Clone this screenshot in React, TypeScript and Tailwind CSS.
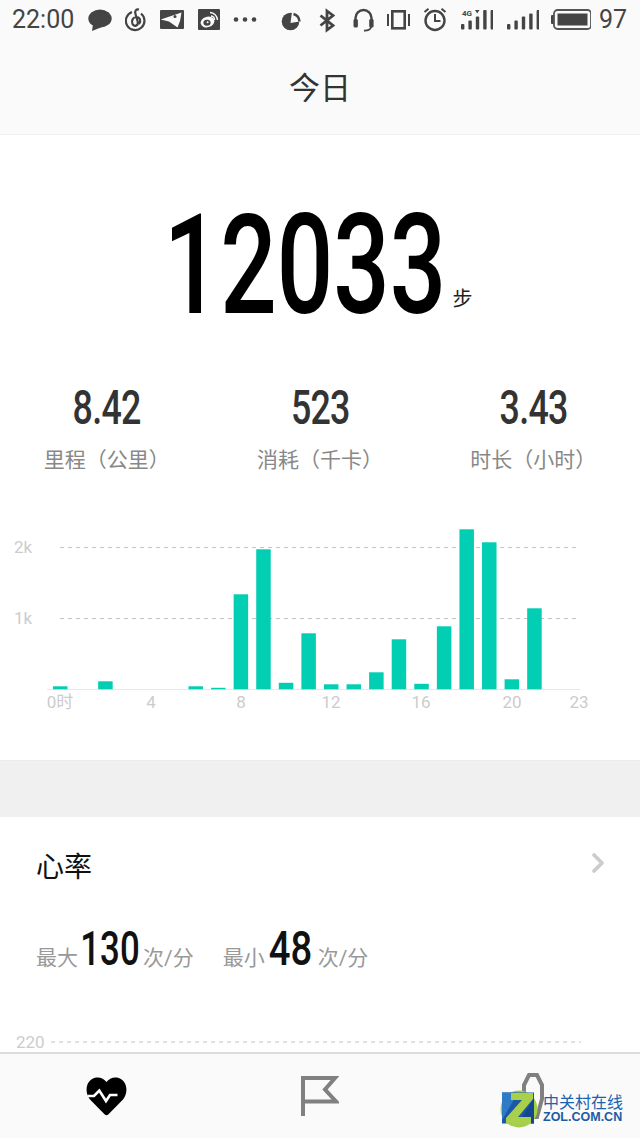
import React from 'react';
import { ChevronRight } from 'lucide-react';

const bars = [3, 0, 8, 0, 0, 0, 3, 1.5, 95, 140, 6.5, 56, 5, 5, 17, 50, 5.5, 63, 160, 147, 10, 81];
const hourLabels = [
  { x: 60, text: '0时' },
  { x: 151, text: '4' },
  { x: 241, text: '8' },
  { x: 331, text: '12' },
  { x: 421, text: '16' },
  { x: 512, text: '20' },
  { x: 579, text: '23' },
];

const Icon: React.FC<{ w: number; ml: number; children: React.ReactNode }> = ({ w, ml, children }) => (
  <svg width={w} height={40} viewBox={`0 0 ${w} 40`} style={{ marginLeft: ml }} className="shrink-0">
    {children}
  </svg>
);

const SignalBars: React.FC<{ tops: number[] }> = ({ tops }) => (
  <>
    {tops.map((top, i) => (
      <rect key={i} x={1 + i * 7.4} y={top} width={3.4} height={29.5 - top} rx={1} fill="#444" />
    ))}
  </>
);

const StatusBar = () => (
  <div className="flex h-10 items-center pl-3 text-[#444]">
    <span className="w-[63px] text-[25px] font-['Roboto',sans-serif]">22:00</span>
    <Icon w={24} ml={13}>
      <ellipse cx={12} cy={18.5} rx={11.7} ry={9} fill="#444" />
      <path d="M5 24 L4 31 L14 27 Z" fill="#444" />
    </Icon>
    <Icon w={21} ml={13}>
      <path d="M7 12 A9.3 9.3 0 1 0 16 13.5" fill="none" stroke="#444" strokeWidth={2.2} />
      <path d="M14 9.5 C11 9 9.5 11 10.5 14 L12.8 22 C13.5 26 9 27 7.5 24 C6 20.5 8 17.5 11 17 C15 16.8 16.5 21 14 24" fill="none" stroke="#444" strokeWidth={2.2} />
    </Icon>
    <Icon w={24} ml={14}>
      <rect x={0} y={10} width={24} height={19} rx={1} fill="#444" />
      <path d="M0.7 19.5 L21.5 12.5 L20 21 L17.5 27.5 L9 21.5 Z" fill="#fafafa" />
      <circle cx={15} cy={16.5} r={1.5} fill="#444" />
    </Icon>
    <Icon w={22} ml={14}>
      <rect x={0} y={9} width={22} height={21} rx={1} fill="#444" />
      <ellipse cx={9.5} cy={22} rx={7} ry={5.3} transform="rotate(-15 9.5 22)" fill="#fafafa" />
      <ellipse cx={9} cy={22.8} rx={3.6} ry={3} fill="#444" />
      <circle cx={9.6} cy={22.2} r={1} fill="#fafafa" />
      <path d="M12 12.5 A8 8 0 0 1 19.5 20 M13 16 A4 4 0 0 1 16.5 20" fill="none" stroke="#fafafa" strokeWidth={1.4} />
    </Icon>
    <Icon w={24} ml={13}>
      <circle cx={3} cy={19.5} r={2.3} fill="#444" />
      <circle cx={12} cy={19.5} r={2.3} fill="#444" />
      <circle cx={21} cy={19.5} r={2.3} fill="#444" />
    </Icon>
    <Icon w={20} ml={24}>
      <circle cx={9.5} cy={21.5} r={8.8} fill="#444" />
      <path d="M9.5 23 L11 12 L21 12 L21 21 Z" fill="#fafafa" />
      <path d="M12.5 14 A8.5 8.5 0 0 1 18.5 21.5" fill="none" stroke="#444" strokeWidth={2.4} />
    </Icon>
    <Icon w={16} ml={18}>
      <path d="M1.5 15.5 L14 25.5 L8 30 V11 L14 15.5 L1.5 25.5" fill="none" stroke="#444" strokeWidth={2.8} />
    </Icon>
    <Icon w={21} ml={18}>
      <path d="M2.5 20 V18 A8 8 0 0 1 18.5 18 V20" fill="none" stroke="#444" strokeWidth={2.4} />
      <rect x={0.5} y={19} width={4.4} height={8.5} rx={1.5} fill="#444" />
      <rect x={16.2} y={19} width={4.4} height={8.5} rx={1.5} fill="#444" />
      <path d="M18 27 C18 30 14 30.7 11 30.5" fill="none" stroke="#444" strokeWidth={1.8} />
    </Icon>
    <Icon w={23} ml={13}>
      <rect x={0} y={14} width={2} height={12} fill="#444" />
      <rect x={21} y={14} width={2} height={12} fill="#444" />
      <rect x={5.3} y={11.3} width={12.4} height={17} fill="none" stroke="#444" strokeWidth={2.6} />
    </Icon>
    <Icon w={24} ml={13}>
      <circle cx={12} cy={20.5} r={9.5} fill="none" stroke="#444" strokeWidth={2.4} />
      <path d="M12 14 V21 H17.5" fill="none" stroke="#444" strokeWidth={2} />
      <path d="M1.5 12 L5.5 8.7 M22.5 12 L18.5 8.7" fill="none" stroke="#444" strokeWidth={2} />
    </Icon>
    <Icon w={33} ml={13}>
      <SignalBars tops={[24, 20.5, 16.5, 10, 10]} />
      <text x={2} y={16} fontSize={8} fontWeight={700} fontFamily="Roboto, sans-serif" fill="#444">4G</text>
      <path d="M15 10 H19.5 L17.2 13.5 Z" fill="#444" />
    </Icon>
    <Icon w={33} ml={13}>
      <SignalBars tops={[24, 20.5, 16.5, 13.5, 10]} />
    </Icon>
    <Icon w={40} ml={12}>
      <rect x={0} y={15} width={3} height={9} rx={1} fill="#444" />
      <rect x={3} y={10} width={37} height={19} rx={3.5} fill="none" stroke="#555" strokeWidth={1.8} />
      <rect x={6.5} y={13.5} width={30} height={12} fill="#444" />
    </Icon>
    <span className="ml-2 text-[25px] font-['Roboto',sans-serif]">97</span>
  </div>
);

const StatCell: React.FC<{ value: string; label: string }> = ({ value, label }) => (
  <div className="flex flex-col items-center pt-[7px]">
    <span className="h-[50px] scale-x-[0.73] text-[49px] leading-[50px] font-medium tracking-[-1px] text-[#333]">
      {value}
    </span>
    <span className="mt-[12px] text-[21px] leading-[30px] text-[#888]">{label}</span>
  </div>
);

// condensed digits: the layout box keeps the narrowed width
const HeartNumber: React.FC<{ value: string; className: string }> = ({ value, className }) => (
  <span className={`${className} ml-[3px] flex justify-center`}>
    <span className="shrink-0 text-[49px] leading-[50px] font-medium text-[#111]">{value}</span>
  </span>
);

const StepsChart = () => (
  <svg width={640} height={210} viewBox="0 510 640 210" className="block">
    {[547.5, 618.5].map(y => (
      <line key={y} x1={60} x2={577} y1={y} y2={y} stroke="#c4c4c4" strokeWidth={1} strokeDasharray="4 4" />
    ))}
    <line x1={47} x2={580} y1={689.5} y2={689.5} stroke="#e8e8e8" strokeWidth={1} />
    {bars.map((h, i) =>
      h > 0 ? <rect key={i} x={53 + i * 22.58} y={689.3 - h} width={14.5} height={h} fill="#02ceb3" /> : null
    )}
    <g fontFamily="Roboto, 'Noto Sans CJK SC', sans-serif" fontSize={17} fill="#cccccc">
      <text x={14} y={553}>2k</text>
      <text x={14} y={624}>1k</text>
      {hourLabels.map(l => (
        <text key={l.text} x={l.x} y={708} textAnchor="middle">{l.text}</text>
      ))}
    </g>
  </svg>
);

const Watermark = () => (
  <div className="absolute left-[500px] top-[1090px] flex items-center">
    <svg width={38} height={38} viewBox="0 0 38 38" className="shrink-0">
      <circle cx={19} cy={19} r={18.5} fill="#a4cf48" />
      <rect x={2} y={2.5} width={32} height={31} fill="#1d58a8" />
      <path d="M2 2.5 L18 2.5 L2 30 Z" fill="#2f7cc6" />
      <path d="M34 33.5 L18 33.5 L34 8 Z" fill="#15478f" />
      <path d="M11 3 H33 L33 9 L18 27 H31 V34 H6 V28 L22 10 H11 Z" fill="#a9d04a" />
    </svg>
    <div className="ml-[5px] flex flex-col">
      <span className="text-[16px] leading-[17px] text-[#1c62ae]">中关村在线</span>
      <span className="text-[12.5px] leading-[13px] font-bold text-[#1c5aa4] font-['Liberation_Sans',sans-serif]">ZOL.COM.CN</span>
    </div>
  </div>
);

export default function App() {
  return (
    <div className="relative flex h-[1138px] w-[640px] flex-col overflow-hidden bg-white font-['Roboto','Noto_Sans_CJK_SC',sans-serif]">
      <header className="h-[135px] shrink-0 border-b border-[#f1f1f1] bg-[#fafafa]">
        <StatusBar />
        <h1 className="mt-[27px] text-center text-[31px] leading-[44px] font-normal text-[#333]">今日</h1>
      </header>

      <div className="min-h-0 flex-1 overflow-hidden">
        <section className="h-[625px]">
          <div className="flex h-[241px] items-end justify-center pr-[5px] pb-[51px]">
            <span className="flex w-[285px] justify-center">
              <span className="shrink-0 scale-x-[0.71] text-[140px] leading-[120px] font-medium text-black">12033</span>
            </span>
            <span className="ml-[5px] mb-[14px] text-[20px] leading-[24px] text-[#222]">步</span>
          </div>
          <div className="grid grid-cols-3">
            <StatCell value="8.42" label="里程（公里）" />
            <StatCell value="523" label="消耗（千卡）" />
            <StatCell value="3.43" label="时长（小时）" />
          </div>
          <div className="mt-[35px]">
            <StepsChart />
          </div>
        </section>

        <div className="h-[57px] border-t border-[#ececec] bg-[#f0f0f0]" />

        <section className="px-[36px] pt-[31px]">
          <div className="flex items-center justify-between">
            <h2 className="text-[28px] leading-[40px] font-normal text-[#111]">心率</h2>
            <ChevronRight size={32} strokeWidth={2.8} className="mr-[-10px] mt-[-10px] text-[#cccccc]" />
          </div>
          <div className="mt-[36px] flex items-baseline text-[21px] text-[#999]">
            <span>最大</span>
            <HeartNumber value="130" className="w-[58px] scale-x-[0.71]" />
            <span className="ml-[4px]">次/分</span>
            <span className="ml-[29px]">最小</span>
            <HeartNumber value="48" className="w-[45px] scale-x-[0.78]" />
            <span className="ml-[5px]">次/分</span>
          </div>
          <div className="mt-[57px] ml-[-20px] flex items-center">
            <span className="text-[17px] leading-[20px] text-[#cccccc]">220</span>
            <svg width={530} height={2} className="ml-[6px]">
              <line x1={0} x2={530} y1={1} y2={1} stroke="#c4c4c4" strokeWidth={1} strokeDasharray="4 4" />
            </svg>
          </div>
        </section>
      </div>

      <nav className="grid h-[86px] shrink-0 grid-cols-3 items-center border-t-2 border-[#dddddd] bg-[#fafafa]">
        <div className="flex justify-center">
          <svg width={41} height={39} viewBox="0 0 41 39">
            <path d="M22.5 37.3 Q20.5 39 18.5 37.3 L4 22.5 C-2 15 0 3 9 .8 C14 -.3 18 2 20.5 5 C23 2 27 -.3 32 .8 C41 3 43 15 37 22.5 Z" fill="#000" />
            <path d="M1.5 19 H8 L13.3 13.5 L20 24 L24 18 H31.5" fill="none" stroke="#fff" strokeWidth={2.6} />
          </svg>
        </div>
        <div className="flex justify-center">
          <svg width={38} height={40} viewBox="0 0 38 40">
            <path d="M2 40 V2 H34 L24 13.5 L35 25.5 H2" fill="none" stroke="#808080" strokeWidth={4} />
          </svg>
        </div>
        <div className="flex justify-center">
          <svg width={22} height={46} viewBox="0 0 22 46">
            <path d="M7 2 H15 L20 12 V26 L15 44 H7 L2 26 V12 Z" fill="none" stroke="#808080" strokeWidth={4} />
          </svg>
        </div>
      </nav>

      <Watermark />
    </div>
  );
}
